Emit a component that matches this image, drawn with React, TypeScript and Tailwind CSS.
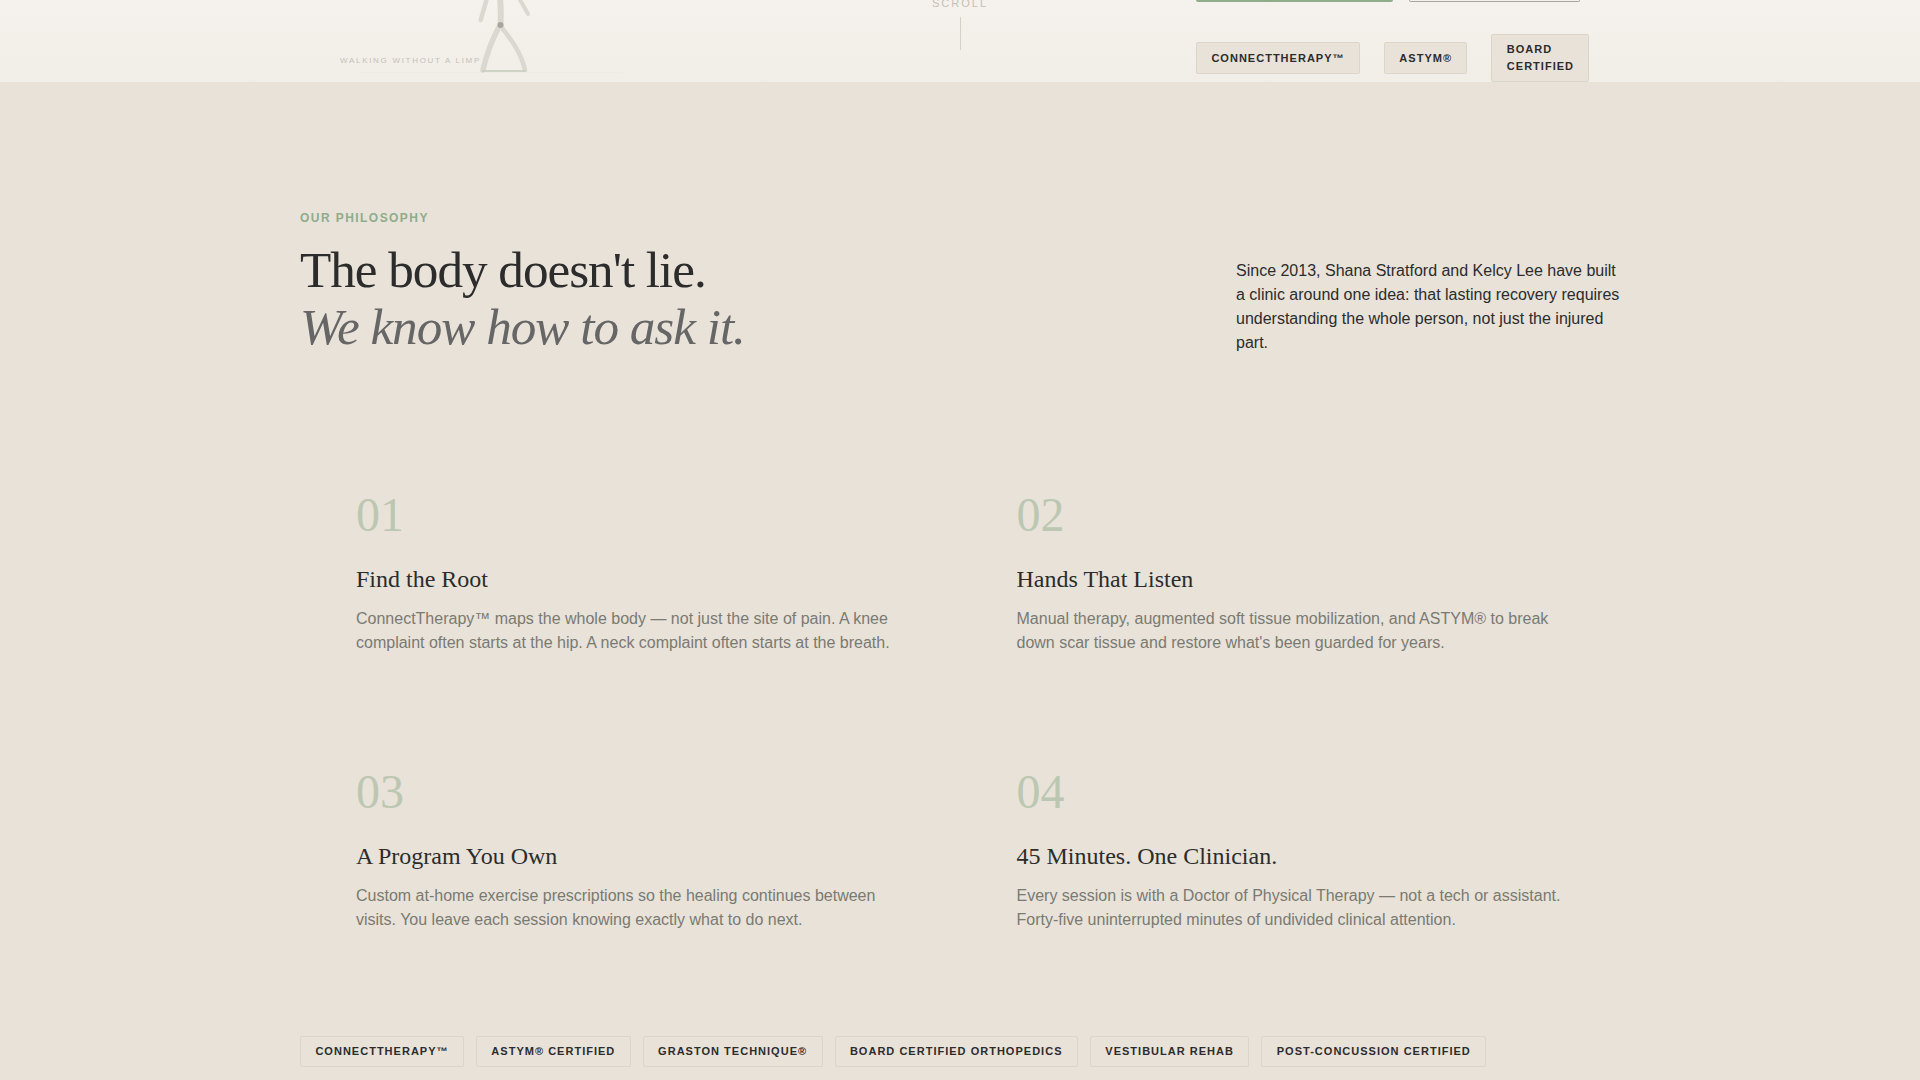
export default function App() {
  const serif = "font-['Liberation_Serif',serif]";
  const cards = [
    ["01", "Find the Root", "ConnectTherapy™ maps the whole body — not just the site of pain. A knee complaint often starts at the hip. A neck complaint often starts at the breath."],
    ["02", "Hands That Listen", "Manual therapy, augmented soft tissue mobilization, and ASTYM® to break down scar tissue and restore what's been guarded for years."],
    ["03", "A Program You Own", "Custom at-home exercise prescriptions so the healing continues between visits. You leave each session knowing exactly what to do next."],
    ["04", "45 Minutes. One Clinician.", "Every session is with a Doctor of Physical Therapy — not a tech or assistant. Forty-five uninterrupted minutes of undivided clinical attention."],
  ];
  const tags = ["CONNECTTHERAPY™", "ASTYM® CERTIFIED", "GRASTON TECHNIQUE®", "BOARD CERTIFIED ORTHOPEDICS", "VESTIBULAR REHAB", "POST-CONCUSSION CERTIFIED"];
  const badge = "border border-[#dbd5ca] bg-[#e8e2d9] px-[14.4px] py-[6.4px] text-[11px] leading-[16.5px] font-bold tracking-[1.015px] text-[#2c2c2c] rounded-[2px]";
  return (
    <div className="h-screen overflow-hidden bg-[#e8e2d9] font-['Liberation_Sans',sans-serif]">
      <div className="relative flex h-[82px] overflow-hidden bg-gradient-to-b from-[#f5f2ed] to-[#f1eee8] pl-[340px]">
        <div className="relative w-[384px] shrink-0">
          <div className="absolute left-0 top-[56px] text-[8px] leading-[10px] tracking-[1.7px] text-[#c4c0b8]">WALKING WITHOUT A LIMP</div>
          <svg className="absolute left-[20px] top-0" width="290" height="82" viewBox="-105 0 290 82" fill="none" strokeLinecap="round">
            <path d="M-105 72.5 H158" stroke="#efece5" strokeWidth="1" />
            <path d="M22 -2 L15.7 20" stroke="#dbd8d1" strokeWidth="4.5" />
            <path d="M54 -2 L63 14" stroke="#dbd8d1" strokeWidth="4" />
            <path d="M35 -2 C36 8 36 16 35.5 25" stroke="#dbd8d1" strokeWidth="6" />
            <path d="M34 27 C28 38 22 52 18 70" stroke="#dbd8d1" strokeWidth="5.5" />
            <path d="M37 28 C45 38 56 52 60 70" stroke="#dbd8d1" strokeWidth="4.5" />
            <path d="M18 71 H60" stroke="#c3ccba" strokeWidth="1.5" />
            <circle cx="35.5" cy="25" r="3" fill="#a8a59e" />
          </svg>
        </div>
        <div className="relative flex w-[472px] shrink-0 flex-col items-center">
          <div className="mt-[-3px] text-[11px] leading-[13px] tracking-[2px] text-[#c4c0b8]">SCROLL</div>
          <div className="mt-[7px] h-[33px] w-px bg-[#d5d1c9]" />
        </div>
        <div className="flex flex-col">
          <div className="flex gap-[16px]">
            <div className="h-[2px] w-[197px] rounded-b-[2px] bg-[#8fac8b]" />
            <div className="h-[2px] w-[171px] rounded-b-[2px] border-x border-b border-[#a9a59d]" />
          </div>
          <div className="mt-[32px] flex items-center gap-[24px]">
            <div className={badge}>CONNECTTHERAPY™</div>
            <div className={badge}>ASTYM®</div>
            <div className={`${badge} w-[98px]`}>BOARD CERTIFIED</div>
          </div>
        </div>
      </div>
      <div className="pl-[300px] pr-[300px] pt-[129px]">
        <div className="flex items-start justify-between">
          <div>
            <div className="text-[12px] leading-[14px] font-bold tracking-[1.44px] text-[#8fac8b]">OUR PHILOSOPHY</div>
            <h2 className={`${serif} mt-[15.5px] text-[51.2px] leading-[57.32px] font-normal tracking-[-1.02px] text-[#2c2c2c]`}>The body doesn't lie.<br /><em className="text-[#666666]">We know how to ask it.</em></h2>
          </div>
          <p className="mr-[-4px] mt-[48px] w-[388px] text-[16px] leading-[24px] text-[#2c2c2c]">Since 2013, Shana Stratford and Kelcy Lee have built a clinic around one idea: that lasting recovery requires understanding the whole person, not just the injured part.</p>
        </div>
        <div className="mt-[135.5px] grid w-[1321px] grid-cols-2 gap-y-[113px]">
          {cards.map(([n, t, d]) => (
            <div key={n} className="px-[56px]">
              <div className={`${serif} text-[48px] leading-[48px] text-[#bcc7b2]`}>{n}</div>
              <div className={`${serif} mt-[26px] text-[24px] leading-[28px] text-[#2c2c2c]`}>{t}</div>
              <p className="mt-[14px] text-[16px] leading-[24px] text-[#7a7a72]">{d}</p>
            </div>
          ))}
        </div>
        <div className="mt-[104px] flex gap-[12px]">
          {tags.map((t) => (
            <div key={t} className={badge}>{t}</div>
          ))}
        </div>
      </div>
    </div>
  );
}
